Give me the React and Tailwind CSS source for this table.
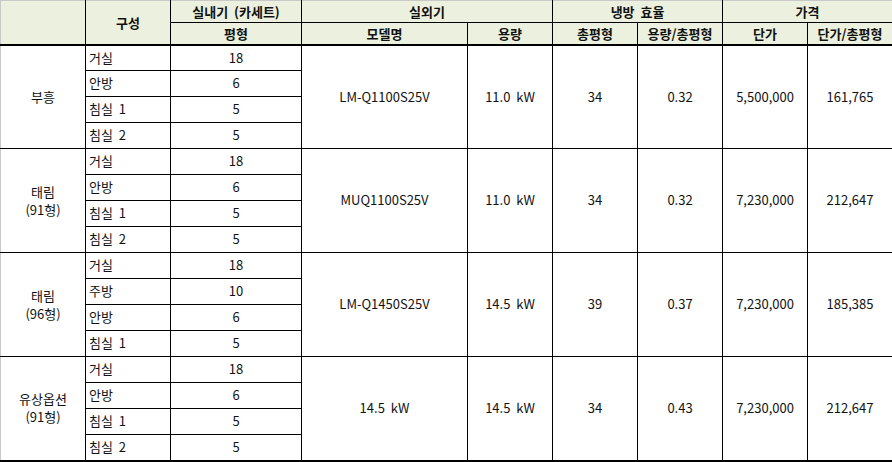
const groups = [
  {
    name: ['부흥'],
    rooms: [
      ['거실', 18],
      ['안방', 6],
      ['침실 1', 5],
      ['침실 2', 5],
    ],
    model: 'LM-Q1100S25V',
    capacity: '11.0 kW',
    total: 34,
    ratio: '0.32',
    price: '5,500,000',
    perArea: '161,765',
  },
  {
    name: ['태림', '(91형)'],
    rooms: [
      ['거실', 18],
      ['안방', 6],
      ['침실 1', 5],
      ['침실 2', 5],
    ],
    model: 'MUQ1100S25V',
    capacity: '11.0 kW',
    total: 34,
    ratio: '0.32',
    price: '7,230,000',
    perArea: '212,647',
  },
  {
    name: ['태림', '(96형)'],
    rooms: [
      ['거실', 18],
      ['주방', 10],
      ['안방', 6],
      ['침실 1', 5],
    ],
    model: 'LM-Q1450S25V',
    capacity: '14.5 kW',
    total: 39,
    ratio: '0.37',
    price: '7,230,000',
    perArea: '185,385',
  },
  {
    name: ['유상옵션', '(91형)'],
    rooms: [
      ['거실', 18],
      ['안방', 6],
      ['침실 1', 5],
      ['침실 2', 5],
    ],
    model: '14.5 kW',
    capacity: '14.5 kW',
    total: 34,
    ratio: '0.43',
    price: '7,230,000',
    perArea: '212,647',
  },
]

const cols = [85, 85, 131, 166, 85, 85, 85, 85, 85]

export default function App() {
  const th = 'border border-black bg-[#ebf1de] font-bold text-center p-0 leading-none'
  const td = 'border border-black text-center p-0 leading-tight'

  return (
    <div className="w-[892px] h-[462px] bg-white overflow-hidden text-[13px] text-[#111] [word-spacing:3px] font-['Noto_Sans_CJK_KR',sans-serif]">
      <table className="table-fixed border-collapse w-[892px] border-l border-r border-t border-l-[#c8c8c8] border-r-[#c8c8c8] border-t-[#c8c8c8]">
        <colgroup>
          {cols.map((w, i) => (
            <col key={i} style={{ width: w }} />
          ))}
        </colgroup>
        <thead>
          <tr className="h-[22px]">
            <th className={`${th} border-t-[#c8c8c8] border-l-[#c8c8c8]`} rowSpan={2}></th>
            <th className={`${th} border-t-[#c8c8c8] border-b-2`} rowSpan={2}>구성</th>
            <th className={`${th} border-t-[#c8c8c8]`}>실내기 (카세트)</th>
            <th className={`${th} border-t-[#c8c8c8]`} colSpan={2}>실외기</th>
            <th className={`${th} border-t-[#c8c8c8]`} colSpan={2}>냉방 효율</th>
            <th className={`${th} border-t-[#c8c8c8] border-r-[#c8c8c8]`} colSpan={2}>가격</th>
          </tr>
          <tr className="h-[22px] border-b-2 border-black">
            <th className={`${th} border-b-2`}>평형</th>
            <th className={`${th} border-b-2`}>모델명</th>
            <th className={`${th} border-b-2`}>용량</th>
            <th className={`${th} border-b-2`}>총평형</th>
            <th className={`${th} border-b-2`}>용량/총평형</th>
            <th className={`${th} border-b-2`}>단가</th>
            <th className={`${th} border-b-2 border-r-[#c8c8c8]`}>단가/총평형</th>
          </tr>
        </thead>
        <tbody>
          {groups.map((g, gi) => {
            const last = gi === groups.length - 1
            const bottom = last ? 'border-b-2' : ''
            return g.rooms.map(([room, area], ri) => (
              <tr key={`${gi}-${ri}`} className="h-[26px]">
                {ri === 0 && (
                  <td className={`${td} border-l-[#c8c8c8] ${bottom}`} rowSpan={4}>
                    {g.name.map((line) => (
                      <div key={line} className="leading-[18px]">{line}</div>
                    ))}
                  </td>
                )}
                <td className={`${td} text-left pl-[3px] ${ri === 3 ? bottom : ''}`}>{room}</td>
                <td className={`${td} ${ri === 3 ? bottom : ''}`}>{area}</td>
                {ri === 0 && (
                  <>
                    <td className={`${td} ${bottom}`} rowSpan={4}>{g.model}</td>
                    <td className={`${td} ${bottom}`} rowSpan={4}>{g.capacity}</td>
                    <td className={`${td} ${bottom}`} rowSpan={4}>{g.total}</td>
                    <td className={`${td} ${bottom}`} rowSpan={4}>{g.ratio}</td>
                    <td className={`${td} ${bottom}`} rowSpan={4}>{g.price}</td>
                    <td className={`${td} border-r-[#c8c8c8] ${bottom}`} rowSpan={4}>{g.perArea}</td>
                  </>
                )}
              </tr>
            ))
          })}
        </tbody>
      </table>
    </div>
  )
}
